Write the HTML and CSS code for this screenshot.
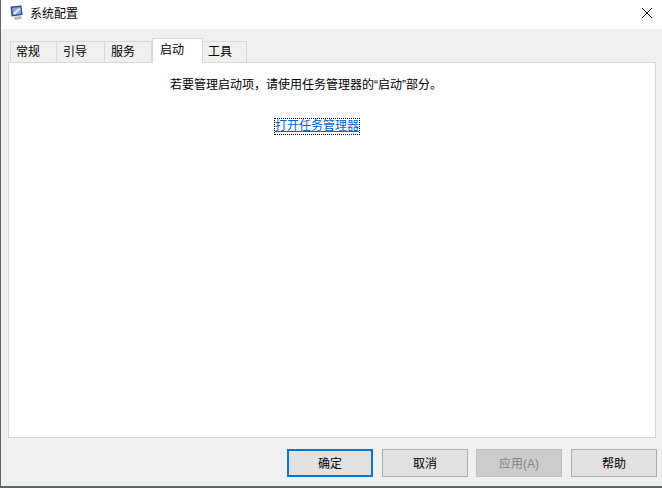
FILE: index.html
```html
<!DOCTYPE html>
<html lang="zh-CN">
<head>
<meta charset="utf-8">
<title>系统配置</title>
<link rel="stylesheet" href="styles.css">
</head>
<body>
<div class="window">
  <header class="titlebar">
    <svg class="app-icon" width="16" height="16" viewBox="0 0 16 16" aria-hidden="true">
      <path d="M1.5 1.5 L12.5 .5 L13.5 10 L2.5 11.5Z" fill="#3d4270"/>
      <path d="M3 2.8 L11.5 2 L12.2 8.8 L3.8 9.9Z" fill="#7fa6e0"/>
      <path d="M4 8.5 L10 3 L11.5 4 L6 9.6Z" fill="#e8f0fb"/>
      <path d="M5 12 L11.5 11 L13.5 13.8 L6 15Z" fill="#b4b4bc"/>
    </svg>
    <span class="title">系统配置</span>
    <svg class="close" width="10" height="10" viewBox="0 0 10 10" aria-hidden="true">
      <path d="M0 0 L10 10 M10 0 L0 10" stroke="#111" stroke-width="1" fill="none"/>
    </svg>
  </header>
  <main class="body">
    <nav class="tabs">
      <div class="tab t1">常规</div>
      <div class="tab t2">引导</div>
      <div class="tab t3">服务</div>
      <div class="tab active">启动</div>
      <div class="tab t5">工具</div>
    </nav>
    <section class="panel">
      <p class="msg">若要管理启动项，请使用任务管理器的“启动”部分。</p>
      <a class="link" href="#">打开任务管理器</a>
    </section>
    <footer class="buttons">
      <button class="btn default">确定</button>
      <button class="btn">取消</button>
      <button class="btn disabled">应用(A)</button>
      <button class="btn">帮助</button>
    </footer>
  </main>
  <div class="bottom-strip"></div>
</div>
</body>
</html>
```
FILE: styles.css
```css
* { box-sizing: border-box; }
html, body { margin: 0; padding: 0; }
body {
  width: 662px;
  height: 488px;
  overflow: hidden;
  font-family: "Liberation Sans", "Noto Sans CJK SC", sans-serif;
  font-size: 12px;
  color: #000;
  background: #f0f0f0;
}
.window {
  height: 488px;
  display: flex;
  flex-direction: column;
  border-left: 1px solid #5d6660;
}
.titlebar {
  height: 29px;
  flex: none;
  background: #fff;
  display: flex;
  align-items: center;
  padding: 0 10px 0 8px;
}
.app-icon { flex: none; margin-top: -4px; }
.title { margin-left: 5px; line-height: 29px; }
.close { margin-left: auto; margin-top: -4px; }
.body {
  flex: 1;
  background: #f0f0f0;
  display: flex;
  flex-direction: column;
  padding: 9px 6px 0 7px;
}
.tabs {
  height: 24px;
  flex: none;
  display: flex;
  align-items: flex-end;
  padding-left: 2px;
  position: relative;
  z-index: 1;
}
.tab {
  height: 21px;
  border: 1px solid #d9d9d9;
  border-bottom: 0;
  border-left-width: 0;
  background: #f0f0f0;
  line-height: 20px;
  padding-left: 6px;
}
.t1 { width: 47px; border-left-width: 1px; padding-left: 5px; }
.t2 { width: 48px; }
.t3 { width: 47px; }
.t5 { width: 44px; padding-left: 5px; }
.active {
  width: 51px;
  height: 25px;
  background: #fff;
  border-left-width: 1px;
  margin-bottom: -1px;
  padding-left: 7px;
  line-height: 22px;
}
.panel {
  height: 376px;
  flex: none;
  background: #fff;
  border: 1px solid #d9d9d9;
  display: flex;
  flex-direction: column;
  align-items: center;
  padding-top: 13px;
}
.msg { margin: 0; line-height: 18px; padding-right: 52px; }
.link {
  margin-top: 25px;
  margin-right: 30px;
  color: #0066cc;
  line-height: 15px;
  text-decoration: underline;
  outline: 1px dotted #000;
}
.buttons {
  display: flex;
  justify-content: flex-end;
  gap: 9px;
  margin-top: 11px;
  margin-right: -1px;
}
.btn {
  width: 86px;
  height: 28px;
  border: 1px solid #adadad;
  background: #e1e1e1;
  font-family: inherit;
  font-size: 12px;
  color: #000;
  padding: 0 0 2px;
}
.default { border: 2px solid #0078d7; }
.disabled { background: #cccccc; border-color: #bfbfbf; color: #838383; margin-left: -1px; }
.bottom-strip { height: 2px; flex: none; background: #5d6660; margin-left: -1px; }
```
